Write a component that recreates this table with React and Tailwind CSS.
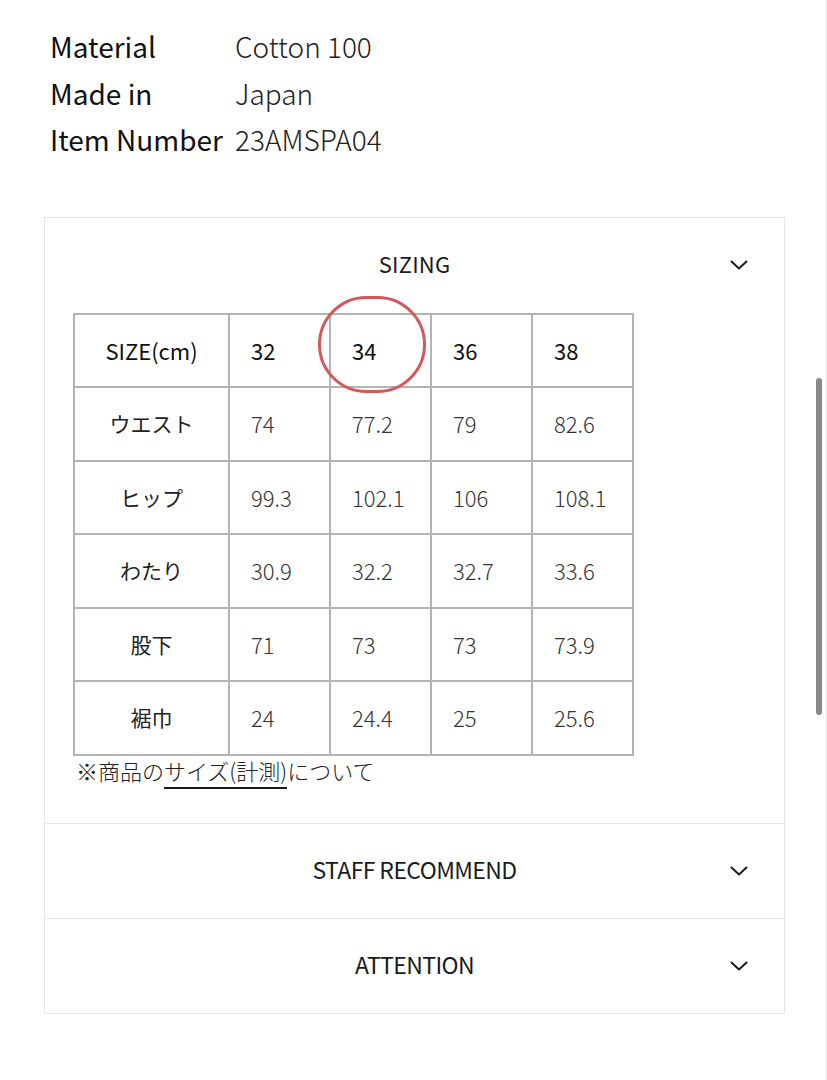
import React from "react";

const font = { fontFamily: '"Noto Sans CJK JP", "Noto Sans", sans-serif' };

const specs = [
  ["Material", "Cotton 100"],
  ["Made in", "Japan"],
  ["Item Number", "23AMSPA04"],
];

const sizes = ["32", "34", "36", "38"];

const rows = [
  ["ウエスト", "74", "77.2", "79", "82.6"],
  ["ヒップ", "99.3", "102.1", "106", "108.1"],
  ["わたり", "30.9", "32.2", "32.7", "33.6"],
  ["股下", "71", "73", "73", "73.9"],
  ["裾巾", "24", "24.4", "25", "25.6"],
];

const Chevron = () => (
  <svg width="18" height="10" viewBox="0 0 18 10" fill="none" stroke="#1a1a1a" strokeWidth="2" strokeLinecap="round" strokeLinejoin="round">
    <polyline points="1.5,1.5 9,8.5 16.5,1.5" />
  </svg>
);

const SectionHead = ({ title, narrow }) => (
  <div
    className={
      narrow
        ? "grid grid-cols-[1fr_auto_1fr] items-center h-[94px]"
        : "grid grid-cols-[1fr_auto_1fr] items-center h-[95px]"
    }
  >
    <div />
    <span
      className={
        narrow
          ? "pb-[3px] text-[23px] tracking-[-0.6px] text-[#1a1a1a]"
          : "pb-[3px] text-[22px] tracking-[0.2px] text-[#1a1a1a]"
      }
    >
      {title}
    </span>
    <div className="flex justify-end pr-[36px]">
      <Chevron />
    </div>
  </div>
);

const SizingTable = () => (
  <div className="relative w-[560px]">
    <table className="border-collapse w-[560px] table-fixed">
      <colgroup>
        <col className="w-[155px]" />
        <col className="w-[101px]" />
        <col className="w-[101px]" />
        <col className="w-[101px]" />
        <col className="w-[101px]" />
      </colgroup>
      <tbody>
        <tr className="h-[73.5px]">
          <td className="border-2 border-[#b4b4b4] text-center text-[22px] text-[#111]">SIZE(cm)</td>
          {sizes.map((s) => (
            <td key={s} className="border-2 border-[#b4b4b4] pl-[21px] text-[22px] text-[#111]">
              {s}
            </td>
          ))}
        </tr>
        {rows.map((r) => (
          <tr key={r[0]} className="h-[73.5px]">
            <td className="border-2 border-[#b4b4b4] text-center text-[21px] text-[#222]">{r[0]}</td>
            {r.slice(1).map((v, i) => (
              <td key={i} className="border-2 border-[#b4b4b4] pl-[21px] text-[22px] font-light text-[#333]">
                {v}
              </td>
            ))}
          </tr>
        ))}
      </tbody>
    </table>
    {/* hand-drawn highlight around size 34 */}
    <div className="absolute left-[245px] top-[-17px] w-[108px] h-[97px] rounded-full border-[3px] border-[#d4575a]" />
  </div>
);

export default function App() {
  return (
    <div className="relative w-[827px] min-h-[1080px] bg-white" style={font}>
      <div className="pl-[50px] pt-[23px]">
        {specs.map(([k, v]) => (
          <div key={k} className="flex h-[46.5px] items-center text-[28px]">
            <span className="w-[185px] shrink-0 text-[#111]">{k}</span>
            <span className="font-light text-[#222]">{v}</span>
          </div>
        ))}
      </div>

      <div className="mt-[54px] ml-[44px] w-[741px] border border-[#e6e6e6]">
        <SectionHead title="SIZING" />
        <div className="pl-[28px]">
          <SizingTable />
          <p className="pl-[3px] h-[67px] text-[22px] font-light text-[#222] leading-[28px]">
            ※商品の
            <span className="border-b-2 border-[#1a1a1a] pb-[1px]">サイズ(計測)</span>
            について
          </p>
        </div>
        <div className="border-t border-[#e6e6e6]">
          <SectionHead title="STAFF RECOMMEND" narrow />
        </div>
        <div className="border-t border-[#e6e6e6]">
          <SectionHead title="ATTENTION" narrow />
        </div>
      </div>

      {/* scrollbar overlay */}
      <div className="absolute left-[816px] top-[378px] w-[6px] h-[337px] rounded-full bg-[#8a8a8a]" />
      <div className="absolute right-0 top-0 w-px h-[1080px] bg-[#e4e4e4]" />
    </div>
  );
}
